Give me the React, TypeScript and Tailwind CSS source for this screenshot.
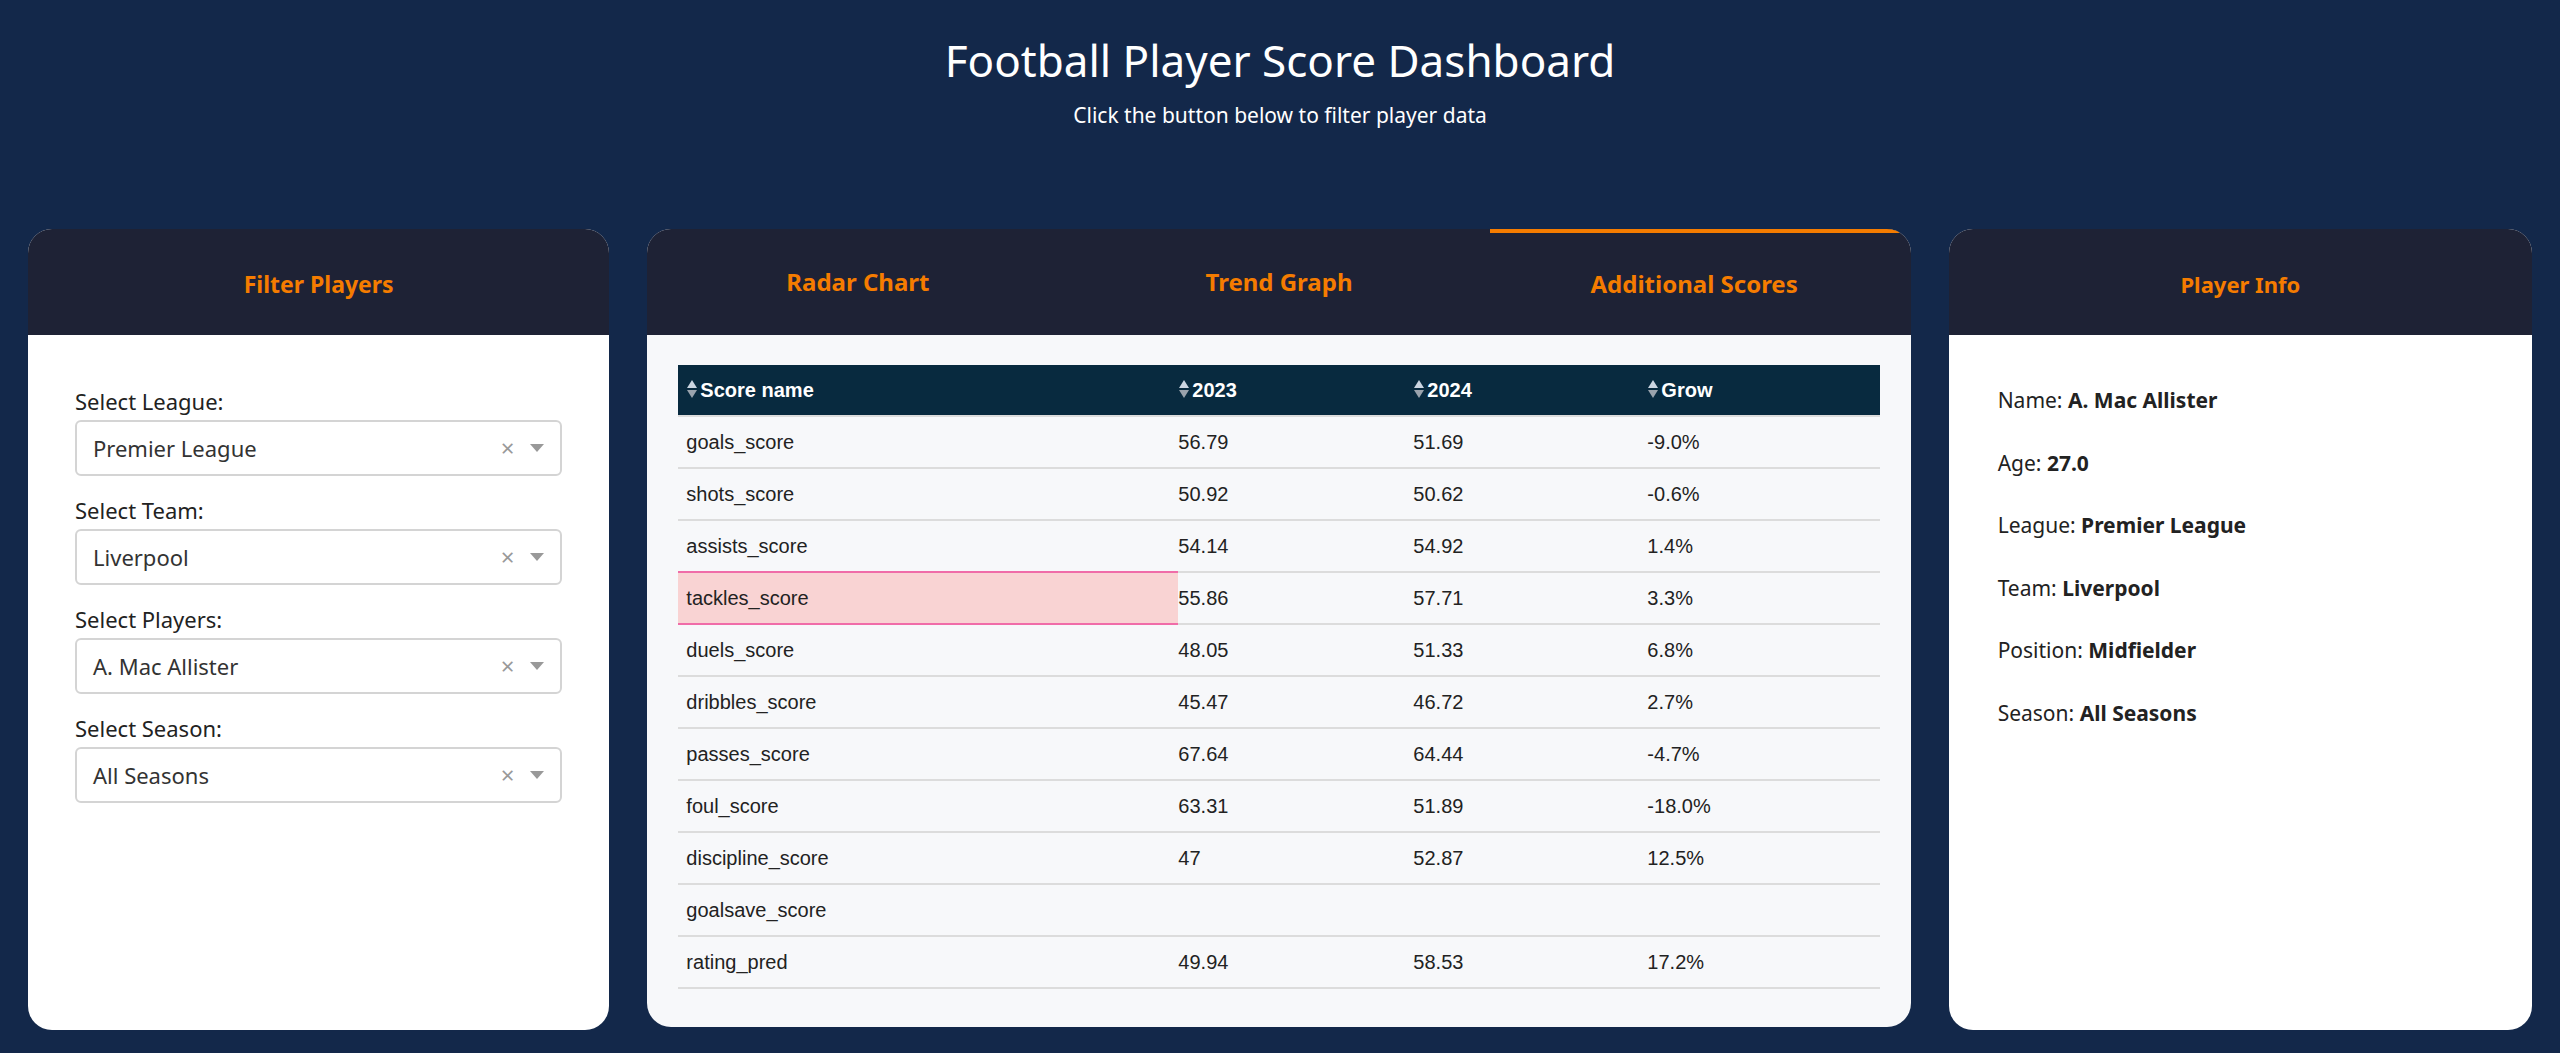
const rows: [string, string, string, string][] = [
  ['goals_score', '56.79', '51.69', '-9.0%'],
  ['shots_score', '50.92', '50.62', '-0.6%'],
  ['assists_score', '54.14', '54.92', '1.4%'],
  ['tackles_score', '55.86', '57.71', '3.3%'],
  ['duels_score', '48.05', '51.33', '6.8%'],
  ['dribbles_score', '45.47', '46.72', '2.7%'],
  ['passes_score', '67.64', '64.44', '-4.7%'],
  ['foul_score', '63.31', '51.89', '-18.0%'],
  ['discipline_score', '47', '52.87', '12.5%'],
  ['goalsave_score', '', '', ''],
  ['rating_pred', '49.94', '58.53', '17.2%'],
];

function Sort() {
  return (
    <svg width="12" height="22" viewBox="0 0 12 22" className="mr-0.5 inline-block align-[-3px]">
      <path d="M6 2 L11 10 L1 10 Z" fill="#cbd5e1" />
      <path d="M6 20 L11 12 L1 12 Z" fill="#9aa3ad" />
    </svg>
  );
}

function Select({ label, value }: { label: string; value: string }) {
  return (
    <div className="flex flex-col">
      <div className="text-[22px] text-[#222] mb-0.5">{label}</div>
      <div className="h-[56px] border-2 border-[#d4d4d4] rounded-md flex items-center px-4 bg-white">
        <span className="flex-1 text-[22px] text-[#333]">{value}</span>
        <span className="text-[#999] text-[24px] mr-4">×</span>
        <svg width="14" height="8" viewBox="0 0 14 8"><path d="M0 0 L14 0 L7 8 Z" fill="#999" /></svg>
      </div>
    </div>
  );
}

export default function App() {
  return (
    <div className="w-[2560px] h-[1053px] bg-[#13284a] flex flex-col" style={{ fontFamily: '"Source Sans Pro", "Noto Sans", sans-serif' }}>
      <div className="flex flex-col items-center pt-[32px] h-[229px]">
        <h1 className="text-[44px] text-white leading-[56px]">Football Player Score Dashboard</h1>
        <p className="text-[21px] text-white mt-[12px]">Click the button below to filter player data</p>
      </div>
      <div className="flex gap-[38px] px-[28px]">
        <div className="w-[584px] h-[801px] rounded-[24px] overflow-hidden bg-white flex flex-col">
          <div className="h-[106px] bg-[#1e2235] flex items-center justify-center text-[#f57c00] font-bold text-[23px] pt-1">Filter Players</div>
          <div className="flex flex-col gap-[18px] px-[47px] pt-[50px]">
            <Select label="Select League:" value="Premier League" />
            <Select label="Select Team:" value="Liverpool" />
            <Select label="Select Players:" value="A. Mac Allister" />
            <Select label="Select Season:" value="All Seasons" />
          </div>
        </div>
        <div className="w-[1269px] h-[798px] rounded-[24px] overflow-hidden bg-[#f7f8fa] flex flex-col">
          <div className="h-[106px] bg-[#1e2235] grid grid-cols-3 text-[#f57c00] font-bold text-[24px]">
            <div className="flex items-center justify-center">Radar Chart</div>
            <div className="flex items-center justify-center">Trend Graph</div>
            <div className="flex items-center justify-center border-t-[4px] border-[#f57c00] mr-[12px]">Additional Scores</div>
          </div>
          <div className="px-[31px] pt-[30px]" style={{ fontFamily: '"Liberation Sans", Arial, sans-serif' }}>
            <table className="w-full border-collapse text-[20px] text-[#222]">
              <thead>
                <tr className="bg-[#082a3f] text-white h-[51px] font-bold">
                  <th className="text-left pl-[8px] w-[500px] font-bold"><Sort />Score name</th>
                  <th className="text-left w-[235px] font-bold"><Sort />2023</th>
                  <th className="text-left w-[234px] font-bold"><Sort />2024</th>
                  <th className="text-left font-bold"><Sort />Grow</th>
                </tr>
              </thead>
              <tbody>
                {rows.map((r) => {
                  const hl = r[0] === 'tackles_score';
                  return (
                    <tr key={r[0]} className="h-[52px] border-t-2 border-[#dcdcdc]">
                      <td className={hl ? 'pl-[8px] bg-[#f9d3d3] border-y-2 border-[#f06ca8]' : 'pl-[8px]'}>{r[0]}</td>
                      <td>{r[1]}</td>
                      <td>{r[2]}</td>
                      <td>{r[3]}</td>
                    </tr>
                  );
                })}
                <tr className="border-t-2 border-[#dcdcdc]"><td colSpan={4}></td></tr>
              </tbody>
            </table>
          </div>
        </div>
        <div className="w-[586px] h-[801px] rounded-[24px] overflow-hidden bg-white flex flex-col" style={{ fontFamily: '"Noto Sans", sans-serif' }}>
          <div className="h-[106px] bg-[#1e2235] flex items-center justify-center text-[#f57c00] font-bold text-[22px] pt-1">Player Info</div>
          <div className="flex flex-col gap-[31px] px-[49px] pt-[50px] text-[21px] text-[#222]">
            <div>Name: <b>A. Mac Allister</b></div>
            <div>Age: <b>27.0</b></div>
            <div>League: <b>Premier League</b></div>
            <div>Team: <b>Liverpool</b></div>
            <div>Position: <b>Midfielder</b></div>
            <div>Season: <b>All Seasons</b></div>
          </div>
        </div>
      </div>
    </div>
  );
}
